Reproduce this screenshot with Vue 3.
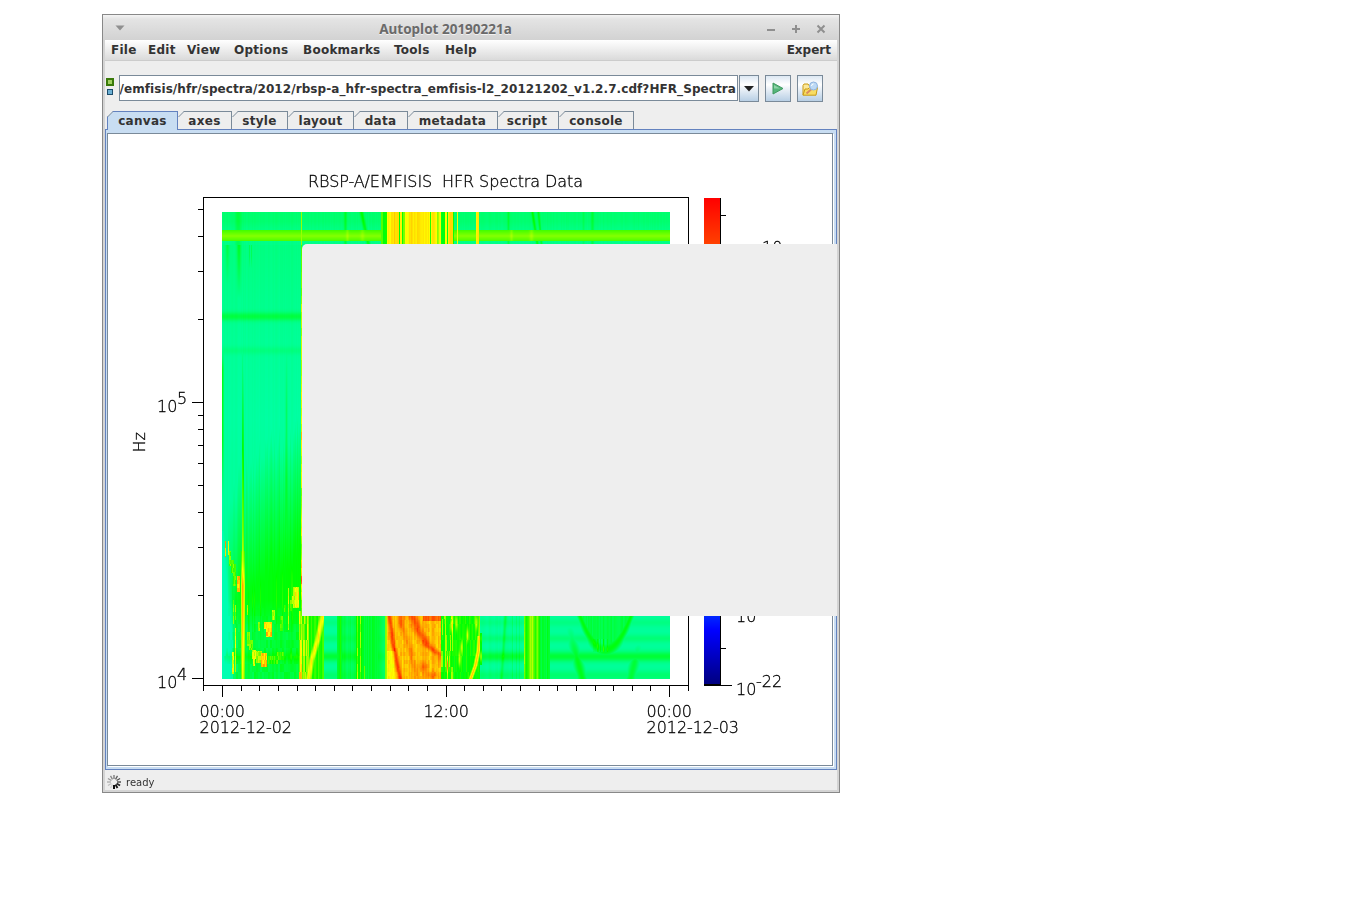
<script setup>
import { ref, onMounted } from 'vue';

const menus = ['File', 'Edit', 'View', 'Options', 'Bookmarks', 'Tools', 'Help'];
const tabs = ['canvas', 'axes', 'style', 'layout', 'data', 'metadata', 'script', 'console'];
const activeTab = ref('canvas');
const uri = ref('/emfisis/hfr/spectra/2012/rbsp-a_hfr-spectra_emfisis-l2_20121202_v1.2.7.cdf?HFR_Spectra');

// frequency axis, log scale: 276px per decade, 10^4 at y=678
const freqTicks = [];
for (let d = 4; d <= 5; d++) {
  for (let m = 1; m < 10; m++) {
    if (d === 5 && m > 5) break;
    const y = Math.round(678.2 - 276 * (d - 4 + Math.log10(m)));
    freqTicks.push({ y, major: m === 1 });
  }
}

// hours, from 23:00 the day before to 01:00 the day after
const hourTicks = [];
for (let h = -1; h <= 25; h++) {
  hourTicks.push({ x: Math.round(222 + h * 18.63), major: h % 12 === 0 });
}

const spokes = Array.from({ length: 12 }, (_, i) => ({
  angle: 180 - i * 30,
  opacity: 1 - i * 0.08,
  width: i < 3 ? 1.9 : 1.3
}));

const plot = ref(null);
const X0 = 222, Y0 = 212, W = 448, H = 467;

const noise = (a, b = 0) => {
  const n = Math.sin(a * 127.1 + b * 311.7) * 43758.5453;
  return n - Math.floor(n);
};
const clamp = (v, lo, hi) => Math.max(lo, Math.min(hi, v));
const bump = (d, w) => Math.exp(-(d * d) / (w * w));

// piecewise linear lookup, pts = [[t, value], ...]
const lerp = (pts, t) => {
  if (t <= pts[0][0]) return pts[0][1];
  for (let i = 1; i < pts.length; i++) {
    if (t <= pts[i][0]) {
      const [a, va] = pts[i - 1];
      const [b, vb] = pts[i];
      return va + (vb - va) * (t - a) / (b - a);
    }
  }
  return pts[pts.length - 1][1];
};

// 0 = sea green, 1 = green, 2 = yellow, 3 = red
const color = (v) => {
  v = clamp(v, 0, 3);
  if (v < 1) return [0, 255, 178 * (1 - v)];
  if (v < 2) return [255 * (v - 1), 255, 0];
  return [255, 255 * (3 - v), 0];
};

// bursts in the top channels: [from, to, level]
const bursts = [
  [381, 383, 1.25], [383, 384, 0.9], [384, 387, 1.02], [387, 391, 2.05], [391, 399, 2.15], [399, 400, 1.0], [400, 402, 2],
  [402, 403, 1.1], [403, 405, 1.4], [405, 409, 2], [409, 422, 2.1], [422, 430, 2.03], [430, 431, 1.2],
  [431, 437, 2.04], [437, 439, 1.6], [439, 441, 1.95], [441, 445, 0.9], [445, 447, 1.95], [447, 448, 0.95],
  [448, 453, 2.1], [453, 454, 1], [457, 458, 2], [476, 479, 2.05]
];

// small patches near the plasma frequency: [x, y, w, h, level]
const patches = [
  [225, 541, 1, 16, 2.3], [228, 541, 1, 14, 2], [229, 551, 2, 15, 1.4], [231, 560, 3, 13, 1.3], [233, 564, 3, 22, 1.35],
  [237, 576, 3, 16, 2.2], [233, 600, 1, 24, 1.4], [235, 605, 1, 15, 1.5], [232, 652, 2, 22, 1.9], [235, 628, 1, 44, 1.8],
  [247, 605, 1, 10, 1.7], [247, 632, 3, 14, 1.45], [249, 640, 4, 10, 1.4], [252, 650, 4, 9, 1.8], [253, 658, 2, 8, 1.9],
  [256, 651, 6, 12, 1.6], [261, 653, 6, 14, 2.2], [258, 622, 2, 9, 1.6], [264, 622, 8, 7, 2.1], [266, 628, 6, 9, 2.2],
  [272, 610, 3, 10, 1.7], [268, 656, 10, 8, 1.2], [280, 616, 3, 15, 1.3], [277, 652, 7, 8, 1.25], [284, 605, 2, 7, 1.3],
  [288, 588, 1, 42, 1.7], [290, 600, 2, 11, 1.4], [293, 587, 6, 21, 1.85], [295, 592, 4, 15, 2.05], [292, 596, 3, 8, 1.7]
];

const orbitLine = [[244, 1.5], [320, 1.7], [400, 1.8], [430, 2.05], [500, 1.6], [520, 2.05], [545, 1.6], [580, 2.45], [600, 1.4], [640, 2], [679, 2.3]];

function topStrip(x, y) {
  let v = y < 230 ? 0.38 - Math.max(0, y - 221) * 0.014 : 0.24;
  v += (noise(x) - 0.5) * 0.05;
  v += bump(x - 238, 3) * 0.3 + bump(x - 345, 1.5) * 0.4;
  v += bump(x - lerp([[212, 361], [244, 368]], y), 1.8) * 0.6;
  v += bump(x - lerp([[212, 532], [244, 537]], y), 1.4) * 0.6;
  v += bump(x - lerp([[212, 538], [244, 541]], y), 1.2) * 0.5;
  v += bump(x - 508, 1.2) * 0.35 + bump(x - 583, 1.5) * 0.15 + bump(x - 592, 1.4) * 0.35;
  if (y >= 230 && y < 241) {
    v = 1.52 - Math.abs(y - 235.5) * 0.045;
    v += bump(x - 347, 1.5) * 0.15 + bump(x - 362, 2) * 0.12 + bump(x - 511, 1.5) * 0.15 + bump(x - 531, 2) * 0.15;
  }
  for (const [a, b, level] of bursts) {
    if (x >= a && x < b) v = level + (noise(x) - 0.5) * 0.16;
  }
  return v;
}

function leftPart(x, y) {
  const col = noise(x);
  let v = lerp([[241, 0.28], [350, 0.15], [420, 0.1], [460, 0.12]], y);
  v += (col - 0.5) * 0.05;
  v += bump(x - 238.5, 2) * 0.6 * clamp((298 - y) / 55, 0, 1);
  v += bump(x - 227, 2) * 0.35 * clamp((284 - y) / 40, 0, 1);
  if (x === 249 || x === 251) v += clamp((268 - y) / 50, 0, 0.25);
  v += bump(y - 316, 4.2) * 0.45 + bump(y - 350, 4) * 0.14;
  if (y > 350 && x < 224) v += clamp((y - 350) / 20, 0, 1) * (x === 222 ? 0.75 : 0.35) * clamp((500 - y) / 60, 0, 1);
  v += bump(x - 286, 1.1) * 0.35 * clamp((y - 350) / 60, 0, 1) * clamp((530 - y) / 50, 0, 1);

  const start = lerp([[222, 560], [232, 490], [245, 470], [270, 445], [300, 430]], x) + (col - 0.5) * 36;
  v += clamp((y - start) / 125, 0, 1) * lerp([[222, 0.3], [232, 0.6], [240, 0.8], [246, 0.78], [300, 0.88]], x);
  if (x < 233 && y > 530) v -= clamp((y - lerp([[222, 520], [232, 590]], x)) / 40, 0, 1) * 0.35;
  if (y > 600) v -= clamp((y - 600) / 30, 0, 1) * (0.12 + 0.28 * noise(x >> 1, y >> 3));
  v += col > 0.8 ? 0.16 * bump(y - 605, 30) : 0;
  v += bump(y - 656, 5) * 0.25;

  for (const [px, py, w, h, level] of patches) {
    if (x >= px && x < px + w && y >= py && y < py + h) v = level + (noise(x, y >> 2) - 0.5) * 0.4;
  }
  const line = lerp([[320, 0], [390, 0.45], [460, 1.1], [530, 1.5], [560, 1.8], [585, 2.35], [630, 2.2], [679, 1.9]], y);
  if (x === 242 || x === 243) v = Math.max(v, line + (x === 242 ? 0 : -0.15));
  if ((x === 241 || x === 244) && y > 550) v = Math.max(v, line - 0.5);
  if (x === 301) v = lerp(orbitLine, y) + (noise(7, y >> 3) - 0.5) * 0.5;
  if (y > 610 && (x === 299 || x === 300)) v = 1.3 + noise(x, y >> 4);
  return v;
}

function bottomStrip(x, y) {
  const col = noise(x);
  const cell = noise(x >> 1, y >> 2);
  const rows = 0.12 + bump(y - 622, 4) * 0.15 + bump(y - 638, 4) * 0.22 + bump(y - 656, 5) * 0.58 + bump(y - 675, 5) * 0.26;
  if (x < 324) {
    const cx = lerp([[616, 322], [640, 317], [660, 311], [679, 308]], y);
    const v = x < 309 ? 1 + noise(x, y >> 4) * 0.95 : 0.95 + col * 0.35;
    return Math.max(v, bump(x - cx, 4.5) * 2 + (col - 0.5) * 0.3);
  }
  if (x < 386) {
    if (x < 337) return rows;
    if (x < 342) return x === 340 ? 1.1 : 0.65 + col * 0.3;
    if (x < 356) return rows * 0.5 + 0.35 + col * 0.2;
    if (x < 362) return x === 357 || x === 360 ? 1.75 - noise(x, y >> 3) * 0.5 : 1;
    if (x < 378) return 0.6 + col * 0.25 + (x === 364 && y > 665 ? 0.8 : 0);
    return x === 385 ? 1.5 : clamp(0.65 - (x - 378) * 0.05 + rows * 0.2, 0.2, 1);
  }
  if (x < 441) {
    let v = 2.24 + (col - 0.5) * 0.18 + (cell - 0.5) * 0.14;
    if (x === 386) return 1.6;
    if (x < 395 && y > 650) v -= 0.2;
    v += bump(x - lerp([[616, 389], [645, 393], [665, 397], [679, 400]], y), 2.2) * 0.55;
    v += bump(x - lerp([[616, 412], [632, 419], [645, 427], [655, 440]], y), 4.5) * 0.42 * clamp((668 - y) / 18, 0, 1);
    v += bump(x - 400, 2.5) * 0.25 * clamp((633 - y) / 10, 0, 1);
    v += bump(x - lerp([[625, 402], [650, 410], [679, 416]], y), 3) * 0.18;
    v += bump(x - 423, 4) * bump(y - 667, 5) * 0.3 + bump(x - 432, 7) * bump(y - 675, 4) * 0.25;
    if (y < 621 && x > 422) v = 2.6 + (col - 0.5) * 0.2;
    return v;
  }
  if (x < 480) {
    let v = 0.85 + noise(x, y >> 4) * 0.35;
    if (x < 453 && noise(x, (y + 5) >> 4) > 0.75) v += 0.5;
    for (const [px, py] of [[461, 647], [467, 635], [456, 622], [459, 659], [447, 665], [451, 625], [476, 622]]) {
      v += bump(x - px, 1.3) * bump(y - py, 7) * 0.8;
    }
    const cx = lerp([[616, 480], [650, 478], [665, 475], [679, 470]], y);
    return Math.max(v, bump(x - cx, 3) * (y > 635 ? 2.2 : 1.6));
  }
  if (x < 524) {
    let v = rows + (col - 0.5) * 0.08 + bump(x - lerp([[616, 505], [679, 501]], y), 1.5) * 0.4;
    if (x < 482 && y > 632 && y < 665) v += 0.8;
    if ([512, 516, 519].includes(x)) v += 0.2;
    return v;
  }
  if (x < 550) {
    if (x === 524) return 1.9 - noise(3, y >> 3) * 0.5;
    if (x < 540) return 0.95 + col * 0.4 + bump(x - 531, 2.2) * 0.5 + bump(x - 537, 1) * 0.3;
    return 0.6 + col * 0.3;
  }
  let v = rows;
  const bow = 649 - 35 * ((x - 605) / 26) ** 2;
  if (x > 570 && x < 640) {
    if (y < bow) v = Math.max(v, 0.62 + (col - 0.5) * 0.18);
    v = Math.max(v, bump(y - bow, 8) * 0.92);
    if (y > 638 && y < 652 && x > 592 && x < 608) v += (col - 0.4) * 0.5;
  }
  v = Math.max(v, bump(x - lerp([[616, 567], [640, 572], [679, 582]], y), 5) * clamp((y - 620) / 45, 0, 0.85));
  v = Math.max(v, bump(x - lerp([[645, 638], [679, 630]], y), 5) * clamp((y - 640) / 30, 0, 0.7));
  return v;
}

onMounted(() => {
  const ctx = plot.value.getContext('2d');
  const img = ctx.createImageData(W, H);
  for (let j = 0; j < H; j++) {
    for (let i = 0; i < W; i++) {
      const x = X0 + i;
      const y = Y0 + j;
      let v;
      if (y < 245) v = x === 301 ? 1.6 : topStrip(x, y);
      else if (x < 302) v = leftPart(x, y);
      else if (y > 610) v = bottomStrip(x, y);
      else v = 0.2;
      const [r, g, b] = color(v);
      const k = (j * W + i) * 4;
      img.data[k] = r;
      img.data[k + 1] = g;
      img.data[k + 2] = b;
      img.data[k + 3] = 255;
    }
  }
  ctx.putImageData(img, X0 - 108, Y0 - 134);
});
</script>

<template>
<div class="window">
  <header class="titlebar">
    <svg class="winmenu" width="10" height="6" viewBox="0 0 10 6"><path d="M0.5 0.5h9L5 5.5z" fill="#8f8f8f" /></svg>
    <h1>Autoplot 20190221a</h1>
    <div class="controls">
      <svg width="10" height="10" viewBox="0 0 10 10"><path d="M1 6h8" /></svg>
      <svg width="10" height="10" viewBox="0 0 10 10"><path d="M1 5h8M5 1v8" /></svg>
      <svg width="10" height="10" viewBox="0 0 10 10"><path d="M1.5 1.5l7 7M8.5 1.5l-7 7" /></svg>
    </div>
  </header>
  <div class="content">
    <nav class="menubar">
      <span v-for="m in menus" :key="m">{{ m }}</span>
      <span class="expert">Expert</span>
    </nav>
    <div class="address">
      <div class="leds"><i class="led green"></i><i class="led blue"></i></div>
      <div class="uri"><span>{{ uri }}</span></div>
      <button class="drop"><svg width="10" height="6" viewBox="0 0 10 6"><path d="M0 0h10L5 5.5z" fill="#222" /></svg></button>
      <button class="tool">
        <svg width="12" height="13" viewBox="0 0 12 13">
          <path d="M1 1v11l10-5.5z" fill="#55b57b" stroke="#3f9a60" />
          <path d="M2 3v3.5l6 0z" fill="#8ed3a8" />
        </svg>
      </button>
      <button class="tool open">
        <svg width="17" height="16" viewBox="0 0 17 16">
          <path d="M1 14V4.5l1-1.5h4l1.5 2H14v3" fill="#fbe89a" stroke="#c99a14" />
          <path d="M1 14.2L3 8h3l1.5-1.500H15.5L14 14.2z" fill="#f8dc62" stroke="#c99a14" />
          <path d="M9 8.5L4.5 12.5" stroke="#d98b62" stroke-width="2" />
          <circle cx="11.5" cy="5" r="4" fill="#bcd9f5" stroke="#8fb3de" />
          <path d="M9.5 5a2 2 0 0 1 2-2" fill="none" stroke="#fff" />
        </svg>
      </button>
    </div>
    <div class="tabs">
      <div v-for="t in tabs" :key="t" class="tab" :class="[t, { active: t === activeTab }]" @click="activeTab = t">
        <svg class="corner" width="7" height="7" viewBox="0 0 7 7"><path d="M0 0h6L0 6z" class="cut" /><path d="M0.5 6L6 0.5" class="slant" /></svg>
        <span>{{ t }}</span>
      </div>
    </div>
    <div class="tabbody">
      <div class="canvas">
        <canvas ref="plot" width="724" height="631"></canvas>
        <svg class="axes-layer" width="724" height="631" viewBox="108 134 724 631">
          <defs>
            <linearGradient id="bar" x1="0" y1="0" x2="0" y2="1">
              <stop offset="0" stop-color="#ff0000" />
              <stop offset="0.1" stop-color="#ff4400" />
              <stop offset="0.3" stop-color="#ffff00" />
              <stop offset="0.5" stop-color="#00ff00" />
              <stop offset="0.68" stop-color="#00ffff" />
              <stop offset="0.85" stop-color="#0035ff" />
              <stop offset="0.89" stop-color="#0000ff" />
              <stop offset="1" stop-color="#000080" />
            </linearGradient>
          </defs>
          <g class="lines">
            <rect x="203.5" y="197.5" width="485" height="488" />
            <path v-for="t in freqTicks" :key="'f' + t.y" :d="`M${t.major ? 192 : 198} ${t.y + 0.5}H203`" />
            <path v-for="t in hourTicks" :key="'h' + t.x" :d="`M${t.x + 0.5} 686V${t.major ? 697 : 691}`" />
          </g>
          <rect x="704" y="198" width="16" height="486" fill="url(#bar)" />
          <g class="lines">
            <path d="M704 684.5H721M704 685.5H732M720.5 198V685M721 215.5H726M721 648.5H726" />
          </g>
          <text x="308" y="187" textLength="275">RBSP-A/EMFISIS&#160; HFR Spectra Data</text>
          <text x="157" y="412">10</text><text x="177" y="404">5</text>
          <text x="157" y="688">10</text><text x="177" y="680">4</text>
          <text transform="translate(145 452.500) rotate(-90)">Hz</text>
          <text x="199.500" y="717" textLength="45.500">00:00</text>
          <text x="199.500" y="733" textLength="92.500">2012-12-02</text>
          <text x="423.500" y="717" textLength="45.500">12:00</text>
          <text x="646.500" y="717" textLength="45.500">00:00</text>
          <text x="646.500" y="733" textLength="92.500">2012-12-03</text>
          <text x="736" y="695">10</text><text x="756" y="687">-22</text>
          <text x="736" y="622">10</text>
          <text x="762" y="253">10</text>
        </svg>
      </div>
    </div>
    <footer class="status">
      <svg width="16" height="16" viewBox="-8 -8 16 16">
        <path v-for="s in spokes" :key="s.angle" d="M0 -3V-7" stroke="#000" :stroke-width="s.width" :opacity="s.opacity" :transform="`rotate(${s.angle})`" />
      </svg>
      <span>ready</span>
    </footer>
    <div class="blank"></div>
  </div>
</div>
</template>

<style>
body {
  background: #fff;
}
</style>

<style scoped>
.window {
  box-sizing: border-box;
  width: 738px;
  height: 779px;
  margin: 14px 0 0 102px;
  border: 1px solid #888;
  background: #d4d4d4;
  display: flex;
  flex-direction: column;
  font-family: "DejaVu Sans", sans-serif;
  color: #333;
}

.titlebar {
  height: 25px;
  display: grid;
  grid-template-columns: 36px 1fr 87px;
  align-items: center;
  background: linear-gradient(#f4f4f4, #e4e4e4 4px, #d2d2d2);
}

.winmenu {
  margin: 0 0 0 12px;
}

h1 {
  margin: 2px 0 0;
  font: bold 13.5px/20px "Noto Sans", sans-serif;
  text-align: center;
  color: #6a6a6a;
  text-shadow: 0 1px 0 #f2f2f2;
}

.controls {
  display: flex;
  gap: 15px;
  padding: 3px 0 0 14px;
}

.controls path {
  stroke: #8f8f8f;
  stroke-width: 2;
  fill: none;
}

.content {
  position: relative;
  flex: 1;
  margin: 0 2px 2px;
  background: #eee;
  display: flex;
  flex-direction: column;
}

.menubar {
  box-sizing: border-box;
  height: 21px;
  display: grid;
  grid-template-columns: 37px 39px 47px 69px 91px 51px 60px 1fr;
  padding: 0 6px;
  border-bottom: 1px solid #ccc;
  background: linear-gradient(#fff, #dadada);
  font-weight: bold;
  font-size: 12px;
  line-height: 21px;
  letter-spacing: 0.25px;
  white-space: nowrap;
}

.expert {
  text-align: right;
  letter-spacing: 0;
}

.address {
  height: 27px;
  display: flex;
  margin: 14px 0 0;
}

.leds {
  width: 14px;
}

.led {
  display: block;
  box-sizing: border-box;
}

.green {
  width: 8px;
  height: 8px;
  margin: 3px 0 0 1px;
  border: 2px solid #3a7a0a;
  background: #a0d060;
}

.blue {
  width: 6px;
  height: 6px;
  margin: 3px 0 0 2px;
  border: 1px solid #1c4c6c;
  background: #6cb0d4;
}

.uri {
  box-sizing: border-box;
  width: 619px;
  height: 26px;
  border: 1px solid #7a8a99;
  background: #fff;
  padding: 0 1px;
  overflow: hidden;
  display: flex;
  justify-content: flex-end;
  white-space: nowrap;
  font-weight: bold;
  font-size: 12px;
  line-height: 26px;
  letter-spacing: 0.08px;
}

button {
  box-sizing: border-box;
  height: 27px;
  padding: 0;
  border: 1px solid #7a8a99;
  border-radius: 0;
  background: linear-gradient(#dde8f3, #fff 35%, #f2f6fa 45%, #b8cfe5);
  display: flex;
  align-items: center;
  justify-content: center;
}

.drop {
  width: 20px;
  margin-left: 1px;
}

.tool {
  width: 26px;
  margin-left: 6px;
}

.tabs {
  display: flex;
  height: 18px;
  margin: 9px 0 0 2px;
}

.tab {
  position: relative;
  box-sizing: border-box;
  height: 18px;
  border: 1px solid #7a8a99;
  border-width: 1px 1px 0 0;
  text-align: center;
  font-weight: bold;
  font-size: 12px;
  line-height: 18px;
  letter-spacing: 0.3px;
}

.canvas.tab { width: 71px; }
.axes { width: 54px; }
.style { width: 56px; }
.layout { width: 66px; }
.data { width: 54px; }
.metadata { width: 90px; }
.script { width: 61px; }
.console { width: 75px; }

.script span {
  margin-right: 2px;
}

.tab.active {
  z-index: 1;
  height: 19px;
  border-color: #6382bf;
  border-left-width: 1px;
  background: #c8ddf2;
}

.corner {
  position: absolute;
  left: 0;
  top: -1px;
}

.active .corner {
  left: -1px;
}

.cut {
  fill: #eee;
}

.slant {
  fill: none;
  stroke: #7a8a99;
}

.tabbody {
  box-sizing: border-box;
  height: 641px;
  padding: 3px 3px 3px 1px;
  border: 1px solid #6382bf;
  background: #c8ddf2;
}

.tabbody .canvas {
  display: grid;
  border: 1px solid #7a8a99;
  background: #fff;
  box-shadow: 1px 1px 0 #fff;
}

.canvas canvas,
.axes-layer {
  grid-area: 1 / 1;
  display: block;
}

.axes-layer text {
  font-family: "DejaVu Sans Light", "DejaVu Sans ExtraLight", "DejaVu Sans", sans-serif;
  font-weight: 200;
  font-size: 16px;
  fill: #000;
  stroke: #000;
  stroke-width: 0.3px;
}

.lines {
  fill: none;
  stroke: #000;
  shape-rendering: crispEdges;
}

.status {
  flex: 1;
  display: flex;
  align-items: center;
  gap: 4px;
  padding: 4px 0 0 1px;
  font-size: 10px;
}

.blank {
  position: absolute;
  left: 197px;
  right: 0;
  top: 204px;
  height: 372px;
  border-top-left-radius: 5px;
  background: #eee;
}
</style>
